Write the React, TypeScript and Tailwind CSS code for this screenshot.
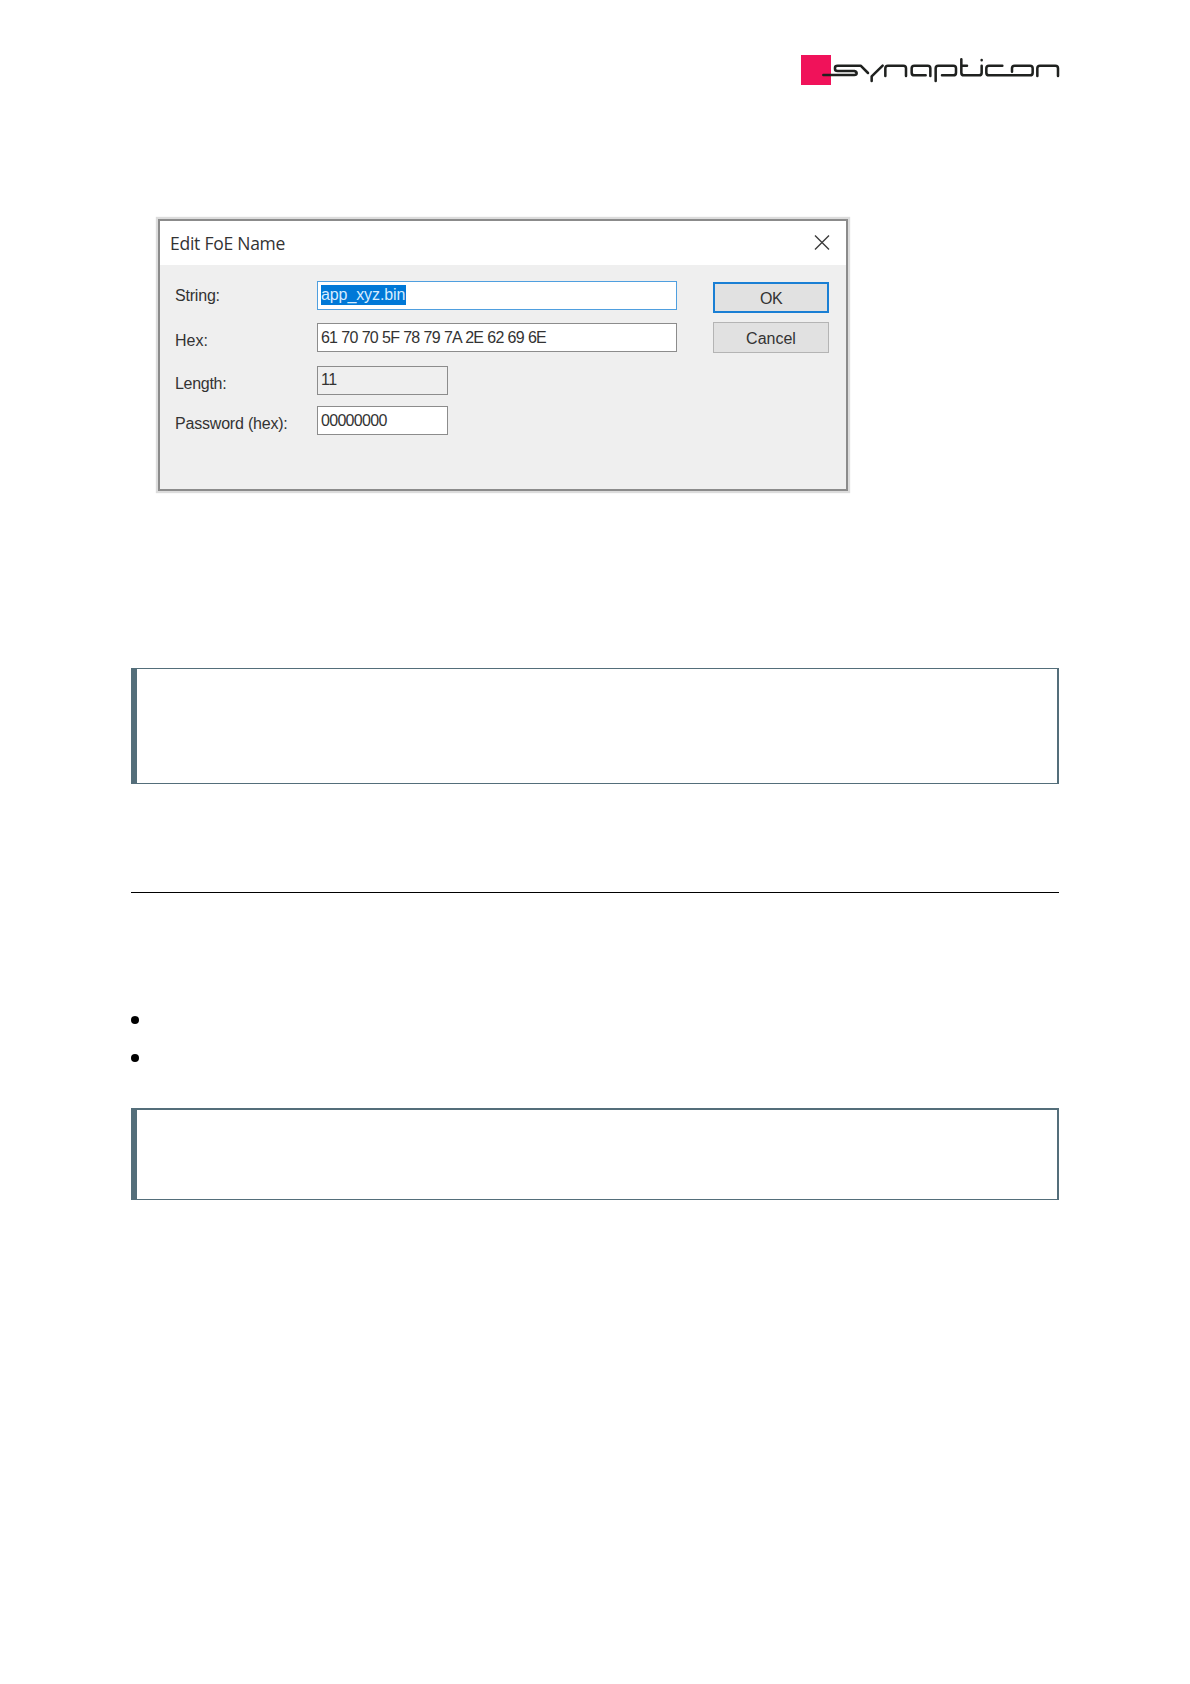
import React from 'react';

interface FieldProps {
  label: string;
  value: string;
  rowClass: string;
  labelClass: string;
  inputClass: string;
  valueClass: string;
}

const FIELDS: FieldProps[] = [
  {
    label: 'String:',
    value: 'app_xyz.bin',
    rowClass: 'h-[42px]',
    labelClass: 'pt-[5px] tracking-[-0.2px]',
    inputClass: 'h-[29px] w-[360px] border-[#4f9fdf] bg-white pt-[3px]',
    valueClass: 'bg-[#0078d7] text-[#d6ecff] tracking-[-0.1px] w-[85px]',
  },
  {
    label: 'Hex:',
    value: '61 70 70 5F 78 79 7A 2E 62 69 6E',
    rowClass: 'h-[43px]',
    labelClass: 'pt-[8px]',
    inputClass: 'h-[29px] w-[360px] border-[#8c8c8c] bg-white pt-[4px]',
    valueClass: 'text-[#333] tracking-[-0.8px] [word-spacing:0.5px]',
  },
  {
    label: 'Length:',
    value: '11',
    rowClass: 'h-[40px]',
    labelClass: 'pt-[8px] tracking-[-0.3px]',
    inputClass: 'h-[29px] w-[131px] border-[#8c8c8c] bg-[#efefef] pt-[3px]',
    valueClass: 'text-[#333] tracking-[-0.4px]',
  },
  {
    label: 'Password (hex):',
    value: '00000000',
    rowClass: 'h-[40px]',
    labelClass: 'pt-[8px] tracking-[-0.2px]',
    inputClass: 'h-[29px] w-[131px] border-[#8c8c8c] bg-white pt-[4px]',
    valueClass: 'text-[#333] tracking-[-0.7px]',
  },
];

const Logo: React.FC = () => (
  <svg width="260" height="32" viewBox="-57 9 780 96" aria-label="synapticon">
    <rect x="-57" y="15" width="90" height="90" fill="#f0125a" />
    <g fill="none" stroke="#1f211f" strokeWidth="7.6" strokeLinecap="round" strokeLinejoin="round">
      <path d="M10 75H103Q110 75 110 70T103 63H53Q45 63 45 57V53Q45 47 53 47H122L144 69" />
      <path d="M188 47L155 79V93" />
      <path d="M196 78V55Q196 47 204 47H250Q258 47 258 55V78" />
      <path d="M317 76H283Q275 76 275 68V55Q275 47 283 47H323Q331 47 331 55V78" />
      <path d="M347 93V55Q347 47 355 47H400Q408 47 408 55V68Q408 76 400 76H366" />
      <path d="M424 28V68Q424 76 432 76H477Q485 76 485 68V47M424 47H441M485 30V31" />
      <path d="M547 47H507Q499 47 499 55V68Q499 76 507 76H630Q638 76 638 68V55Q638 47 630 47H584Q576 47 576 55V65" />
      <path d="M652 78V55Q652 47 660 47H706Q714 47 714 55V78" />
    </g>
  </svg>
);

const Field: React.FC<FieldProps> = ({ label, value, rowClass, labelClass, inputClass, valueClass }) => (
  <div className={`flex items-start whitespace-nowrap text-[16px] leading-[20px] ${rowClass}`}>
    <div className={`w-[142px] shrink-0 text-[#333] ${labelClass}`}>{label}</div>
    <div className={`flex items-start border pl-[3px] ${inputClass}`}>
      <span className={`block h-[20px] ${valueClass}`}>{value}</span>
    </div>
  </div>
);

const EditDialog: React.FC = () => (
  <div className="ml-[158px] mt-[134px] h-[272px] w-[690px] border-2 border-[#8b8b8b] bg-[#efefef] font-['Liberation_Sans',Arial,sans-serif] shadow-[0_0_1px_2px_#dcdcdc]">
    <div className="flex h-[44px] items-center justify-between bg-white pb-px pl-[10px] pr-[16px]">
      <h1 className="font-['Open_Sans','Noto_Sans',sans-serif] text-[17.5px] leading-[24px] tracking-[-0.25px] text-[#333]">
        Edit FoE Name
      </h1>
      <svg width="16" height="16" viewBox="0 0 16 16" stroke="#3c3c3c" strokeWidth="1.4">
        <path d="M1 0.5L15 14.5M15 0.5L1 14.5" />
      </svg>
    </div>
    <div className="flex justify-between pl-[15px] pr-[17px] pt-[16px]">
      <div>
        {FIELDS.map((field) => (
          <Field key={field.label} {...field} />
        ))}
      </div>
      <div className="flex flex-col gap-[9px] pt-px text-[16px] text-[#333]">
        <button className="h-[31px] w-[116px] border-2 border-[#1a7fd4] bg-[#e1e1e1] pt-[2px] tracking-[-0.5px]">OK</button>
        <button className="h-[31px] w-[116px] border border-[#b4b4b4] bg-[#e1e1e1] pt-[2px]">Cancel</button>
      </div>
    </div>
  </div>
);

export default function App() {
  return (
    <div className="h-[1684px] w-[1190px] overflow-hidden bg-white">
      <header className="flex h-[85px] items-end pl-[801px]">
        <Logo />
      </header>
      <EditDialog />
      <main className="ml-[131px] mt-[177px] w-[928px]">
        <div className="h-[116px] border-y border-l-[6px] border-r-2 border-[#546e7a]" />
        <hr className="mt-[108px] border-t border-black" />
        <ul className="mt-[122.5px] flex flex-col gap-[30px]">
          <li className="ml-[0.4px] h-[8px] w-[8px] rounded-full bg-black" />
          <li className="ml-[0.4px] h-[8px] w-[8px] rounded-full bg-black" />
        </ul>
        <div className="mt-[46.5px] h-[92px] border-b border-l-[6px] border-r-2 border-t-2 border-[#546e7a]" />
      </main>
    </div>
  );
}
